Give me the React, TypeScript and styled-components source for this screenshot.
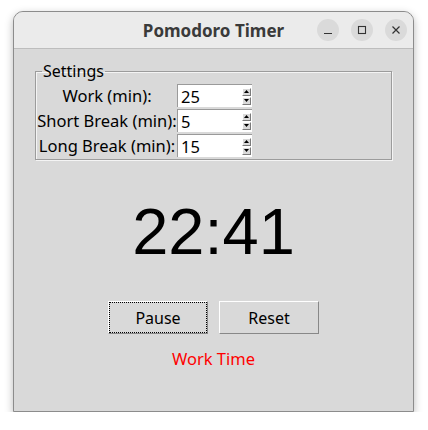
import React from "react";
import styled, { createGlobalStyle } from "styled-components";

const Global = createGlobalStyle`
  html, body { margin: 0; padding: 0; background: #ffffff; }
  body { font-family: "Noto Sans", "DejaVu Sans", sans-serif; }
`;

const Window = styled.div`
  margin: 11px 0 0 13px;
  width: 401px;
  height: 401px;
  box-sizing: border-box;
  border: 1px solid #8c8c8c;
  border-radius: 10px 10px 0 0;
  overflow: hidden;
  display: flex;
  flex-direction: column;
  box-shadow: 0 3px 8px rgba(0, 0, 0, 0.28);
  background: #d9d9d9;
`;

const TitleBar = styled.div`
  height: 36px;
  flex: none;
  background: #ebebeb;
  border-bottom: 1px solid #bdbdbd;
  position: relative;
  display: flex;
  align-items: center;
  justify-content: center;
`;

const Title = styled.div`
  font-family: "Noto Sans", sans-serif;
  font-weight: 700;
  font-size: 17px;
  color: #3a3a3a;
`;

const Controls = styled.div`
  position: absolute;
  right: 6px;
  top: 7px;
  display: flex;
  gap: 12px;
`;

const CtlButton = styled.div`
  width: 22px;
  height: 22px;
  border-radius: 50%;
  background: #dadada;
  display: flex;
  align-items: center;
  justify-content: center;
`;

const Body = styled.div`
  flex: 1;
  display: flex;
  flex-direction: column;
  align-items: center;
  padding: 11px 21px 0;
`;

const Frame = styled.fieldset`
  align-self: stretch;
  margin: 0;
  padding: 0 0 1px 1px;
  border: 1px solid #9c9c9c;
  box-shadow: inset 1px 1px 0 #f4f4f4, 1px 1px 0 #f4f4f4;
  box-sizing: border-box;
`;

const Legend = styled.legend`
  font-size: 16px;
  color: #000;
  padding: 0 1px;
  margin-left: 5px;
  line-height: 22px;
`;

const Grid = styled.div`
  display: grid;
  grid-template-columns: 140px 75px;
  grid-auto-rows: 25px;
  margin-top: 1px;
`;

const FieldLabel = styled.div`
  font-size: 16.5px;
  color: #000;
  display: flex;
  align-items: center;
  justify-content: center;
  white-space: nowrap;
`;

const Spin = styled.div`
  margin: 1px 0;
  background: #ffffff;
  border-top: 1px solid #9a9a9a;
  border-left: 1px solid #9a9a9a;
  display: flex;
  align-items: center;
  justify-content: space-between;
  padding: 0 1px 0 3px;
  font-size: 16.5px;
  color: #000;
`;

const Arrows = styled.div`
  display: flex;
  flex-direction: column;
  gap: 1px;
`;

const ArrowBtn = styled.div`
  width: 9px;
  height: 8px;
  background: #d9d9d9;
  border-right: 1px solid #7a7a7a;
  border-bottom: 1px solid #7a7a7a;
  border-top: 1px solid #fff;
  border-left: 1px solid #fff;
  box-sizing: border-box;
  display: flex;
  align-items: center;
  justify-content: center;
`;

const Clock = styled.div`
  font-family: "Liberation Sans", Arial, sans-serif;
  font-size: 65px;
  color: #000;
  line-height: 74px;
  margin-top: 35px;
`;

const ButtonRow = styled.div`
  display: flex;
  gap: 11px;
  margin-top: 32px;
`;

const Button = styled.button<{ $focused?: boolean }>`
  width: 100px;
  height: 33px;
  box-sizing: border-box;
  background: #d9d9d9;
  border: 1px solid;
  border-color: #ffffff #888888 #888888 #ffffff;
  font-family: "Noto Sans", sans-serif;
  font-size: 16px;
  color: #000;
  padding: 0;
  position: relative;
  &::after {
    content: "";
    display: ${(p) => (p.$focused ? "block" : "none")};
    position: absolute;
    inset: 0;
    border: 1px dotted #000;
  }
`;

const Status = styled.div`
  margin-top: 13px;
  font-size: 16.5px;
  color: #ff0000;
`;

const Up = () => (
  <svg width="5" height="3" viewBox="0 0 5 3">
    <path d="M2.5 0 L5 3 L0 3 Z" fill="#000" />
  </svg>
);
const Down = () => (
  <svg width="5" height="3" viewBox="0 0 5 3">
    <path d="M0 0 L5 0 L2.5 3 Z" fill="#000" />
  </svg>
);

const rows = [
  ["Work (min):", "25"],
  ["Short Break (min):", "5"],
  ["Long Break (min):", "15"],
];

export default function App() {
  return (
    <>
      <Global />
      <Window>
        <TitleBar>
          <Title>Pomodoro Timer</Title>
          <Controls>
            <CtlButton>
              <svg width="10" height="10" viewBox="0 0 10 10">
                <path d="M1 8.5 H9" stroke="#333" strokeWidth="1.2" />
              </svg>
            </CtlButton>
            <CtlButton>
              <svg width="10" height="10" viewBox="0 0 10 10">
                <rect x="1.5" y="1.5" width="7" height="7" fill="none" stroke="#333" strokeWidth="1.1" />
              </svg>
            </CtlButton>
            <CtlButton>
              <svg width="10" height="10" viewBox="0 0 10 10">
                <path d="M1.5 1.5 L8.5 8.5 M8.5 1.5 L1.5 8.5" stroke="#333" strokeWidth="1.2" />
              </svg>
            </CtlButton>
          </Controls>
        </TitleBar>
        <Body>
          <Frame>
            <Legend>Settings</Legend>
            <Grid>
              {rows.map(([label, val]) => (
                <React.Fragment key={label}>
                  <FieldLabel>{label}</FieldLabel>
                  <Spin>
                    <span>{val}</span>
                    <Arrows>
                      <ArrowBtn>
                        <Up />
                      </ArrowBtn>
                      <ArrowBtn>
                        <Down />
                      </ArrowBtn>
                    </Arrows>
                  </Spin>
                </React.Fragment>
              ))}
            </Grid>
          </Frame>
          <Clock>22:41</Clock>
          <ButtonRow>
            <Button $focused>Pause</Button>
            <Button>Reset</Button>
          </ButtonRow>
          <Status>Work Time</Status>
        </Body>
      </Window>
    </>
  );
}
